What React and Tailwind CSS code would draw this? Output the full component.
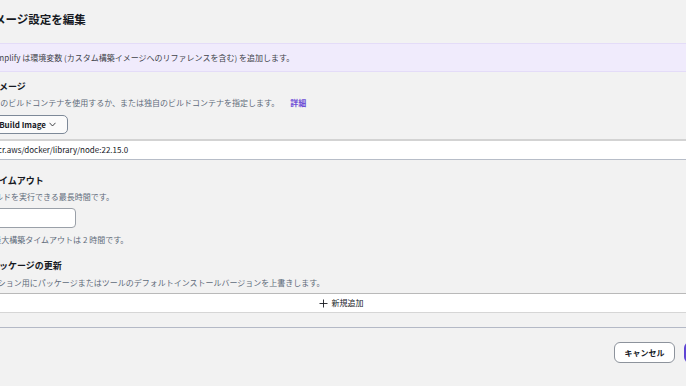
import React from "react";

export default function App() {
  return (
    <div className="w-[686px] h-[386px] overflow-hidden bg-[#f2f2f2] font-['Noto_Sans_CJK_JP','Noto_Sans',sans-serif] text-[#16191f]">
      <div className="-ml-[37px] w-[756px] flex flex-col">
        {/* Title */}
        <div className="h-[40px] flex items-center -ml-[15px] text-[11.5px] font-bold leading-none">
          ビルドイメージ設定を編集
        </div>

        {/* Info banner */}
        <div className="mt-[3px] h-[29px] bg-[#f0ebfc] border-y border-[#e4dcf8] flex items-center pl-[29px] text-[8px] leading-none text-[#3f434a]">
          Amplify は環境変数 (カスタム構築イメージへのリファレンスを含む) を追加します。
        </div>

        {/* Build image section */}
        <div className="mt-[7px] h-[14px] flex items-center text-[9px] font-bold leading-none">
          ビルドイメージ
        </div>
        <div className="mt-[4px] h-[12px] flex items-center pl-[7px] text-[8px] leading-none text-[#5f6b7a]">
          <span>Amplify のビルドコンテナを使用するか、または独自のビルドコンテナを指定します。</span>
          <span className="ml-[11px] text-[#6f4fd6] font-bold">詳細</span>
        </div>
        <div className="mt-[6px] flex">
          <button className="h-[19px] w-[105px] flex items-center justify-end pr-[11px] gap-[3px] rounded-[5px] border border-[#7d8998] bg-[#fbfbfb] text-[8px] font-bold leading-none text-[#16191f]">
            <span>Amplify Build Image</span>
            <svg width="7" height="5" viewBox="0 0 7 5" fill="none">
              <polyline points="0.5,0.8 3.5,4 6.5,0.8" stroke="#16191f" strokeWidth="0.8" />
            </svg>
          </button>
        </div>
        <div className="mt-[5px] h-[21px] bg-white border-t-2 border-t-[#d3d3d3] border-b-[1.5px] border-b-[#b7bdc8] flex items-center pl-[5px] text-[8px] leading-none text-[#16191f]">
          public.ecr.aws/docker/library/node:22.15.0
        </div>

        {/* Timeout section */}
        <div className="mt-[13px] h-[14px] flex items-center text-[9px] font-bold leading-none">
          ビルドタイムアウト
        </div>
        <div className="mt-[4px] h-[12px] flex items-center text-[8px] leading-none text-[#5f6b7a]">
          単一のビルドを実行できる最長時間です。
        </div>
        <div className="mt-[5px] flex">
          <div className="h-[20px] w-[113px] rounded-[4px] border border-[#9aa0a8] bg-white" />
        </div>
        <div className="mt-[6px] h-[12px] flex items-center -ml-[8px] text-[8px] leading-none text-[#5f6b7a]">
          Amplify の最大構築タイムアウトは 2 時間です。
        </div>

        {/* Package updates section */}
        <div className="mt-[12px] h-[14px] flex items-center text-[9px] font-bold leading-none">
          ライブパッケージの更新
        </div>
        <div className="mt-[5px] h-[12px] flex items-center -ml-[5px] text-[8px] leading-none text-[#5f6b7a]">
          アプリケーション用にパッケージまたはツールのデフォルトインストールバージョンを上書きします。
        </div>
        <div className="mt-[4px] h-[20px] bg-white border-t border-t-[#b9b9b9] border-b border-b-[#d6d6d6] flex items-center justify-center gap-[4px] text-[8px] leading-none text-[#16191f]">
          <svg width="9" height="9" viewBox="0 0 9 9" fill="none">
            <line x1="4.5" y1="0.5" x2="4.5" y2="8.5" stroke="#16191f" strokeWidth="0.9" />
            <line x1="0.5" y1="4.5" x2="8.5" y2="4.5" stroke="#16191f" strokeWidth="0.9" />
          </svg>
          <span>新規追加</span>
        </div>
        <div className="h-[15px] border-b border-b-[#b4b9c6]" />

        {/* Footer */}
        <div className="mt-[14px] -mr-[12px] flex justify-end gap-[9px]">
          <button className="h-[21px] w-[61px] rounded-[6px] border border-[#8d939c] bg-white text-[8px] font-bold leading-none text-[#16191f]">
            キャンセル
          </button>
          <button className="h-[21px] w-[47px] rounded-[6px] bg-[#5f45d4] text-[8px] font-bold leading-none text-white">
            保存
          </button>
        </div>
      </div>
    </div>
  );
}
